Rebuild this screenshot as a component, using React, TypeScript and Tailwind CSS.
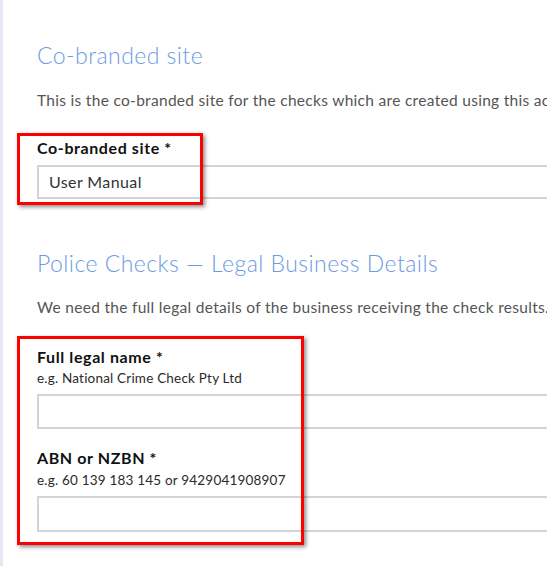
const font = { fontFamily: 'Lato, "Open Sans", sans-serif' };

function Field({ label, hint, labelGap, hintGap }: { label: string; hint?: string; labelGap: string; hintGap?: string }) {
  return (
    <div className={labelGap}>
      <label className="block text-[16px] font-bold leading-[22px] tracking-[0.6px] text-[#111]">{label}</label>
      {hint ? <p className={`${hintGap} text-[13.5px] leading-[18px] tracking-[0.2px] text-[#2a2a2a]`}>{hint}</p> : null}
    </div>
  );
}

export default function App() {
  return (
    <div className="relative h-[566px] w-[547px] overflow-hidden bg-white" style={font}>
      <div className="flex h-full">
        <div className="w-[3px] shrink-0 bg-[#e6e9f5]" />
        <div className="w-[720px] shrink-0 pl-[34px] pt-[40px]">
          <h2 className="text-[23px] font-light leading-[30px] tracking-[0.45px] text-[#6c9be2]">Co-branded site</h2>
          <p className="mt-[19px] whitespace-nowrap text-[15.5px] leading-[22px] tracking-[0.3px] text-[#555]">
            This is the co-branded site for the checks which are created using this account.
          </p>

          <Field label="Co-branded site *" labelGap="mt-[26px]" />
          <div className="mt-[6px] flex h-[34px] items-center border-2 border-[#d4d4d4] px-[10px] text-[16px] tracking-[0.4px] text-[#333]">
            User Manual
          </div>

          <h2 className="mt-[49px] text-[23px] font-light leading-[30px] tracking-[0.45px] text-[#6c9be2]">
            Police Checks — Legal Business Details
          </h2>
          <p className="mt-[18px] whitespace-nowrap text-[15.5px] leading-[22px] tracking-[0.3px] text-[#555]">
            We need the full legal details of the business receiving the check results.
          </p>

          <Field label="Full legal name *" hint="e.g. National Crime Check Pty Ltd" labelGap="mt-[28px]" hintGap="mt-[1px]" />
          <div className="mt-[7px] h-[35px] border-2 border-[#d4d4d4]" />

          <Field label="ABN or NZBN *" hint="e.g. 60 139 183 145 or 9429041908907" labelGap="mt-[18px]" hintGap="mt-[2px]" />
          <div className="mt-[7px] h-[36px] border-2 border-[#d4d4d4]" />
        </div>
      </div>

      <div className="pointer-events-none absolute left-[17px] top-[133px] h-[72px] w-[186px] border-[3px] border-[#f00] shadow-[2px_2px_4px_rgba(0,0,0,0.45)]" />
      <div className="pointer-events-none absolute left-[17px] top-[336px] h-[209px] w-[287px] border-[3px] border-[#f00] shadow-[2px_2px_4px_rgba(0,0,0,0.45)]" />
    </div>
  );
}
